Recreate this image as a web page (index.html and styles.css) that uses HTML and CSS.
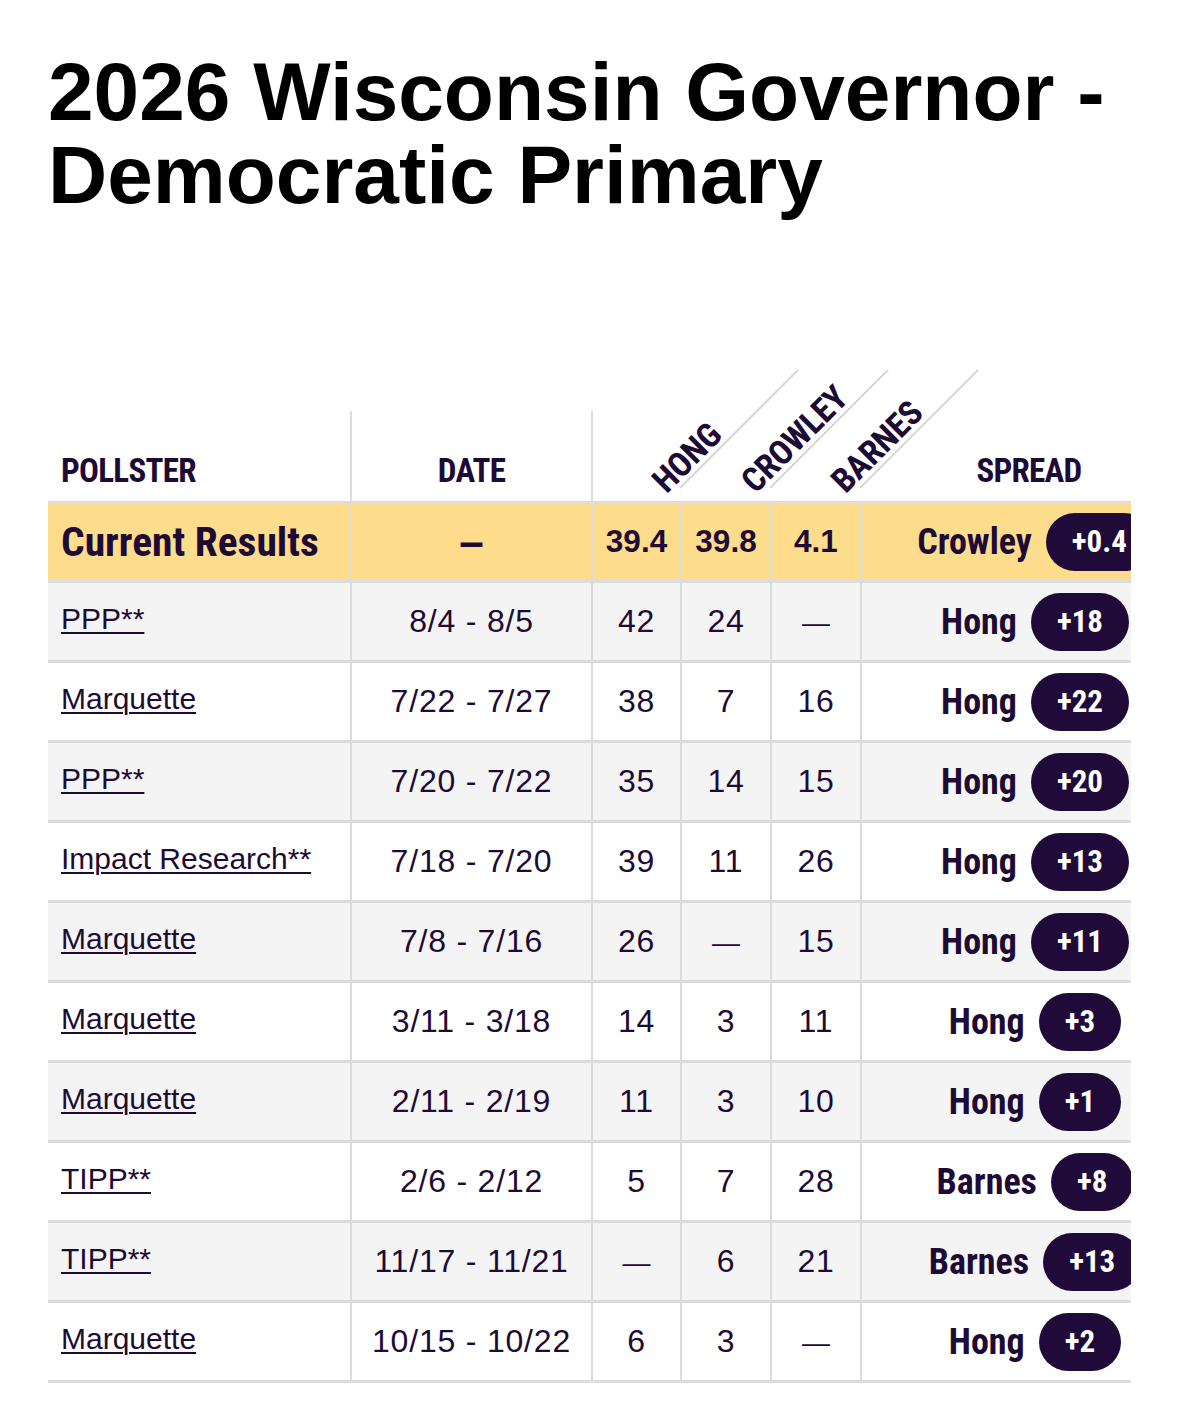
FILE: index.html
```html
<!DOCTYPE html>
<html lang="en">
<head>
<meta charset="utf-8">
<title>2026 Wisconsin Governor - Democratic Primary</title>
<link rel="stylesheet" href="styles.css">
</head>
<body>
<main class="page">
  <h1 class="title">2026 Wisconsin Governor - Democratic Primary</h1>
  <div class="table-wrap">
    <table class="polls">
      <thead>
        <tr>
          <th class="c-pollster">Pollster</th>
          <th class="c-date">Date</th>
          <th class="c-cand c-hong"><span class="diag-line"></span><span class="diag-label">Hong</span></th>
          <th class="c-cand c-crowley"><span class="diag-line"></span><span class="diag-label">Crowley</span></th>
          <th class="c-cand c-barnes"><span class="diag-line"></span><span class="diag-label">Barnes</span></th>
          <th class="c-spread">Spread</th>
        </tr>
      </thead>
      <tbody>
        <tr class="current">
          <td class="c-pollster">Current Results</td>
          <td class="c-date"><span class="cur-dash">–</span></td>
          <td class="c-num">39.4</td>
          <td class="c-num">39.8</td>
          <td class="c-num">4.1</td>
          <td class="c-spread"><div class="spread"><span class="leader">Crowley</span><span class="badge">+0.4</span></div></td>
        </tr>
        <tr>
          <td class="c-pollster"><a href="#">PPP**</a></td>
          <td class="c-date">8/4 - 8/5</td>
          <td class="c-num">42</td>
          <td class="c-num">24</td>
          <td class="c-num"><span class="dash">—</span></td>
          <td class="c-spread"><div class="spread"><span class="leader">Hong</span><span class="badge">+18</span></div></td>
        </tr>
        <tr>
          <td class="c-pollster"><a href="#">Marquette</a></td>
          <td class="c-date">7/22 - 7/27</td>
          <td class="c-num">38</td>
          <td class="c-num">7</td>
          <td class="c-num">16</td>
          <td class="c-spread"><div class="spread"><span class="leader">Hong</span><span class="badge">+22</span></div></td>
        </tr>
        <tr>
          <td class="c-pollster"><a href="#">PPP**</a></td>
          <td class="c-date">7/20 - 7/22</td>
          <td class="c-num">35</td>
          <td class="c-num">14</td>
          <td class="c-num">15</td>
          <td class="c-spread"><div class="spread"><span class="leader">Hong</span><span class="badge">+20</span></div></td>
        </tr>
        <tr>
          <td class="c-pollster"><a href="#">Impact Research**</a></td>
          <td class="c-date">7/18 - 7/20</td>
          <td class="c-num">39</td>
          <td class="c-num">11</td>
          <td class="c-num">26</td>
          <td class="c-spread"><div class="spread"><span class="leader">Hong</span><span class="badge">+13</span></div></td>
        </tr>
        <tr>
          <td class="c-pollster"><a href="#">Marquette</a></td>
          <td class="c-date">7/8 - 7/16</td>
          <td class="c-num">26</td>
          <td class="c-num"><span class="dash">—</span></td>
          <td class="c-num">15</td>
          <td class="c-spread"><div class="spread"><span class="leader">Hong</span><span class="badge">+11</span></div></td>
        </tr>
        <tr>
          <td class="c-pollster"><a href="#">Marquette</a></td>
          <td class="c-date">3/11 - 3/18</td>
          <td class="c-num">14</td>
          <td class="c-num">3</td>
          <td class="c-num">11</td>
          <td class="c-spread"><div class="spread"><span class="leader">Hong</span><span class="badge">+3</span></div></td>
        </tr>
        <tr>
          <td class="c-pollster"><a href="#">Marquette</a></td>
          <td class="c-date">2/11 - 2/19</td>
          <td class="c-num">11</td>
          <td class="c-num">3</td>
          <td class="c-num">10</td>
          <td class="c-spread"><div class="spread"><span class="leader">Hong</span><span class="badge">+1</span></div></td>
        </tr>
        <tr>
          <td class="c-pollster"><a href="#">TIPP**</a></td>
          <td class="c-date">2/6 - 2/12</td>
          <td class="c-num">5</td>
          <td class="c-num">7</td>
          <td class="c-num">28</td>
          <td class="c-spread"><div class="spread"><span class="leader">Barnes</span><span class="badge">+8</span></div></td>
        </tr>
        <tr>
          <td class="c-pollster"><a href="#">TIPP**</a></td>
          <td class="c-date">11/17 - 11/21</td>
          <td class="c-num"><span class="dash">—</span></td>
          <td class="c-num">6</td>
          <td class="c-num">21</td>
          <td class="c-spread"><div class="spread"><span class="leader">Barnes</span><span class="badge">+13</span></div></td>
        </tr>
        <tr>
          <td class="c-pollster"><a href="#">Marquette</a></td>
          <td class="c-date">10/15 - 10/22</td>
          <td class="c-num">6</td>
          <td class="c-num">3</td>
          <td class="c-num"><span class="dash">—</span></td>
          <td class="c-spread"><div class="spread"><span class="leader">Hong</span><span class="badge">+2</span></div></td>
        </tr>
      </tbody>
    </table>
  </div>
</main>
</body>
</html>
```
FILE: styles.css
```css
body {
  margin: 0;
  background: #ffffff;
  font-family: "Liberation Sans", Arial, sans-serif;
  color: #1d0b36;
}

.page {
  padding: 50px 48px 0;
}

.title {
  margin: 0;
  font-size: 82px;
  line-height: 83px;
  font-weight: 700;
  color: #000000;
}

.table-wrap {
  margin-top: 145px;
  padding-top: 50px;
  width: 1083px;
  overflow: hidden;
}

.polls {
  width: 1160px;
  table-layout: fixed;
  border-collapse: separate;
  border-spacing: 0;
}

.polls th,
.polls td {
  box-sizing: border-box;
  padding: 0;
}

.polls thead th {
  height: 92px;
  vertical-align: bottom;
  padding-bottom: 13px;
  border-bottom: 2px solid #dcdcdc;
  font-family: "Roboto Condensed", "Liberation Sans Narrow", "Open Sans", sans-serif;
  font-stretch: condensed;
  font-weight: 700;
  font-size: 33px;
  line-height: 34px;
  letter-spacing: -0.7px;
  text-transform: uppercase;
  color: #1d0b36;
}

.polls thead th.c-pollster {
  width: 304px;
  text-align: left;
  padding-left: 13px;
  border-right: 2px solid #dcdcdc;
}

.polls thead th.c-date {
  width: 241px;
  text-align: center;
  border-right: 2px solid #dcdcdc;
}

.polls thead th.c-hong { width: 89px; }
.polls thead th.c-crowley { width: 90px; }
.polls thead th.c-barnes { width: 90px; }

.polls thead th.c-cand {
  position: relative;
}

.polls thead th.c-spread {
  width: 346px;
  text-align: center;
  padding-right: 12px;
}

.diag-line {
  position: absolute;
  left: calc(100% - 2px);
  top: 76px;
  width: 167px;
  height: 2px;
  background: #d6d6d6;
  transform-origin: 0 50%;
  transform: rotate(-45deg);
}

.diag-label {
  position: absolute;
  left: 77px;
  bottom: 3px;
  font-size: 34px;
  letter-spacing: -0.3px;
  white-space: nowrap;
  transform-origin: 0 100%;
  transform: rotate(-45deg);
}

.polls tbody td {
  height: 80px;
  vertical-align: middle;
  border-bottom: 3px solid #dcdcdc;
  font-size: 32px;
  letter-spacing: 0.8px;
}

.polls tbody td:not(:last-child) {
  border-right: 2px solid #dcdcdc;
}

.polls tbody tr:nth-child(even) td {
  background: #f4f4f4;
}

.polls tbody tr.current td {
  background: #fddc8c;
}

.polls tbody td.c-pollster {
  padding-left: 13px;
  padding-bottom: 6px;
  font-size: 30px;
  letter-spacing: 0;
  text-align: left;
  white-space: nowrap;
}

.polls tbody td.c-pollster a {
  color: #1d0b36;
  text-decoration: underline;
  text-decoration-thickness: 2px;
  text-underline-offset: 3px;
}

.polls tbody td.c-date,
.polls tbody td.c-num {
  text-align: center;
}

.dash {
  font-size: 28px;
  letter-spacing: 0;
}

.polls tbody tr.current td.c-pollster {
  padding-bottom: 0;
  font-family: "Roboto Condensed", "Liberation Sans Narrow", "Open Sans", sans-serif;
  font-stretch: condensed;
  font-weight: 700;
  font-size: 41.5px;
}

.polls tbody tr.current td.c-num {
  font-weight: 700;
  font-size: 31.5px;
  letter-spacing: 0;
}

.cur-dash {
  font-weight: 700;
  font-size: 44px;
  letter-spacing: 0;
}

.spread {
  display: flex;
  justify-content: center;
  align-items: center;
  gap: 14px;
  font-family: "Roboto Condensed", "Liberation Sans Narrow", "Open Sans", sans-serif;
  font-stretch: condensed;
  font-weight: 700;
  letter-spacing: 0;
}

.leader {
  font-size: 36px;
  color: #1d0b36;
}

.badge {
  display: inline-flex;
  align-items: center;
  height: 58px;
  padding: 0 26px;
  border-radius: 29px;
  background: #1f0a3a;
  color: #ffffff;
  font-size: 31px;
}
```
